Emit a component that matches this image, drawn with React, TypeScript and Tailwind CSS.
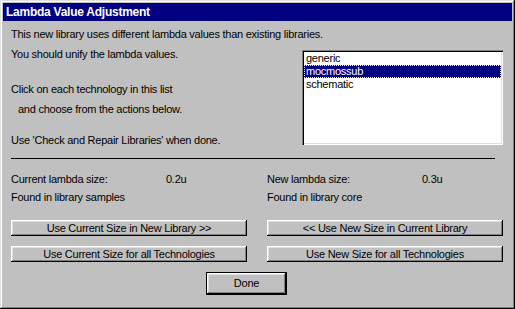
import React from "react";

const btn =
  "flex items-center justify-center bg-[#c0c0c0] text-black shadow-[inset_-1px_-1px_#000,inset_1px_1px_#fff,inset_-2px_-2px_#808080,inset_2px_2px_#dfdfdf]";

function Btn({ label, cls }: { label: string; cls: string }) {
  return <div className={`${btn} ${cls}`}>{label}</div>;
}

export default function App() {
  const items = ["generic", "mocmossub", "schematic"];
  return (
    <div
      className="w-[515px] h-[309px] bg-[#c0c0c0] p-[3px] flex flex-col text-[11px] leading-[13px] tracking-[-0.25px] text-black shadow-[inset_-1px_-1px_#000,inset_1px_1px_#dfdfdf,inset_-2px_-2px_#808080,inset_2px_2px_#fff]"
      style={{ fontFamily: '"Liberation Sans", Arial, sans-serif' }}
    >
      <div className="h-[18px] bg-[#000080] text-white text-[12px] font-bold leading-[18px] pl-[3px] tracking-[-0.25px]">
        Lambda Value Adjustment
      </div>
      <div className="flex flex-col px-[8px]">
        <div className="mt-[7px] h-[13px]">
          This new library uses different lambda values than existing libraries.
        </div>
        <div className="flex flex-row justify-between">
          <div className="flex flex-col">
            <div className="mt-[7px] h-[13px]">You should unify the lambda values.</div>
            <div className="mt-[22px] h-[13px]">Click on each technology in this list</div>
            <div className="mt-[7px] h-[13px] pl-[7px]">and choose from the actions below.</div>
            <div className="mt-[18px] h-[13px]">Use 'Check and Repair Libraries' when done.</div>
          </div>
          <div className="mt-[9px] mr-[1px] w-[201px] h-[95px] bg-white p-[2px] shadow-[inset_1px_1px_#808080,inset_2px_2px_#000,inset_-1px_-1px_#fff,inset_-2px_-2px_#dfdfdf]">
            {items.map((it) =>
              it === "mocmossub" ? (
                <div
                  key={it}
                  className="h-[13px] bg-[#000080] text-white pl-[1px] border border-dotted border-[#ffff80] leading-[11px]"
                >
                  {it}
                </div>
              ) : (
                <div key={it} className="h-[13px] pl-[2px]">
                  {it}
                </div>
              )
            )}
          </div>
        </div>
        <div className="mt-[11px] h-px w-[484px] bg-black" />
        <div className="flex flex-row gap-[20px] mt-[14px]">
          <div className="flex flex-col w-[236px]">
            <div className="flex h-[13px]">
              <span className="w-[155px]">Current lambda size:</span>
              <span>0.2u</span>
            </div>
            <div className="mt-[5px] h-[13px]">Found in library samples</div>
            <Btn label="Use Current Size in New Library >>" cls="mt-[16px] h-[16px]" />
            <Btn label="Use Current Size for all Technologies" cls="mt-[10px] h-[16px]" />
          </div>
          <div className="flex flex-col w-[236px]">
            <div className="flex h-[13px]">
              <span className="w-[155px]">New lambda size:</span>
              <span>0.3u</span>
            </div>
            <div className="mt-[5px] h-[13px]">Found in library core</div>
            <Btn label="<< Use New Size in Current Library" cls="mt-[16px] h-[16px]" />
            <Btn label="Use New Size for all Technologies" cls="mt-[10px] h-[16px]" />
          </div>
        </div>
        <div className="mt-[10px] ml-[195px] w-[81px] h-[23px] border border-black">
          <div className="w-full h-full flex items-center justify-center shadow-[inset_-1px_-1px_#000,inset_1px_1px_#fff,inset_-2px_-2px_#808080,inset_2px_2px_#dfdfdf]">
            Done
          </div>
        </div>
      </div>
    </div>
  );
}
